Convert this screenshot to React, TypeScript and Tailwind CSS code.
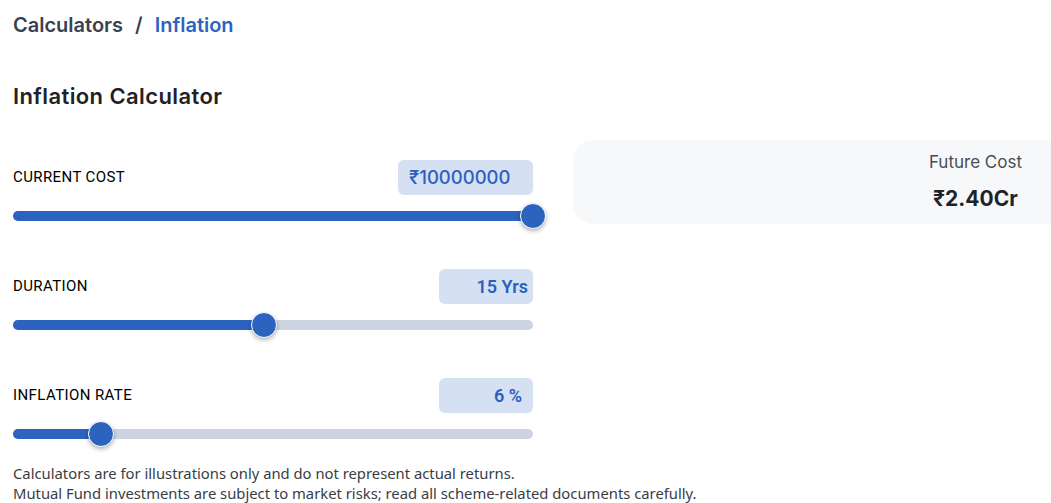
import React from 'react';

interface SliderRowProps {
  label: string;
  value: string;
  percent: number;
  boxClass: string;
  valueFont: string;
}

const SliderRow: React.FC<SliderRowProps> = ({ label, value, percent, boxClass, valueFont }) => {
  return (
    <div className="flex flex-col">
      <div className="flex items-center justify-between h-[35px]">
        <span className="text-[15px] text-black tracking-[0.4px]" style={{ fontFamily: 'Roboto, sans-serif' }}>
          {label}
        </span>
        <div
          className={`h-[35px] rounded-md bg-[#d5e0f2] flex items-center text-[#2c5fbf] ${boxClass}`}
          style={{ fontFamily: valueFont }}
        >
          {value}
        </div>
      </div>
      {/* track */}
      <div className="relative mt-[16px] h-[10px] w-[520px] rounded-full bg-[#ccd3e1]">
        <div className="absolute left-0 top-0 h-full rounded-full bg-[#2c63bf]" style={{ width: `${percent}%` }}></div>
        <div
          className="absolute top-1/2 h-[26px] w-[26px] -translate-x-1/2 -translate-y-1/2 rounded-full border border-white bg-[#2c63bf] shadow-[0_2px_4px_rgba(0,0,0,0.3)]"
          style={{ left: `${percent}%` }}
        ></div>
      </div>
    </div>
  );
};

export default function App() {
  return (
    <div className="w-[1051px] h-[503px] overflow-hidden bg-white px-[13px]">
      {/* breadcrumb */}
      <div className="pt-[11px] text-[20px] font-semibold leading-[28px]" style={{ fontFamily: 'Inter, sans-serif' }}>
        <span className="text-[#3a4150]">Calculators</span>
        <span className="text-[#3a4150] mx-[12px]">/</span>
        <span className="text-[#2c64c0]">Inflation</span>
      </div>

      <h1 className="mt-[43px] text-[22px] font-semibold text-[#1f2229] leading-[28px] tracking-[0.4px]" style={{ fontFamily: 'Inter, sans-serif' }}>
        Inflation Calculator
      </h1>

      <div className="mt-[30px] flex gap-[40px]">
        <div className="w-[520px] flex flex-col pt-[20px] gap-[48px]">
          <SliderRow
            label="CURRENT COST"
            value="₹10000000"
            percent={100}
            boxClass="w-[135px] pl-[11px] font-medium text-[18.5px]"
            valueFont="Inter, sans-serif"
          />
          <SliderRow
            label="DURATION"
            value="15 Yrs"
            percent={48.3}
            boxClass="w-[94px] justify-end pr-[5px] font-semibold text-[18px]"
            valueFont="Roboto, sans-serif"
          />
          <SliderRow
            label="INFLATION RATE"
            value="6 %"
            percent={17}
            boxClass="w-[94px] justify-end pr-[11px] font-semibold text-[18px]"
            valueFont="Roboto, sans-serif"
          />
        </div>

        <div className="w-[520px] shrink-0 h-[84px] rounded-[20px] bg-[#f7f8fa] flex justify-end pr-[71px]" style={{ fontFamily: 'Inter, sans-serif' }}>
          <div className="flex flex-col items-center pt-[11px]">
            <span className="text-[17px] text-[#4a4d55] leading-[22px]">Future Cost</span>
            <span className="mt-[13px] text-[21px] font-bold text-[#1f2229] leading-[26px]">₹2.40Cr</span>
          </div>
        </div>
      </div>

      <div className="mt-[24px] text-[14.8px] text-[#3a3d44] leading-[20px]" style={{ fontFamily: '"Noto Sans", sans-serif' }}>
        <p>Calculators are for illustrations only and do not represent actual returns.</p>
        <p>Mutual Fund investments are subject to market risks; read all scheme-related documents carefully.</p>
      </div>
    </div>
  );
}
